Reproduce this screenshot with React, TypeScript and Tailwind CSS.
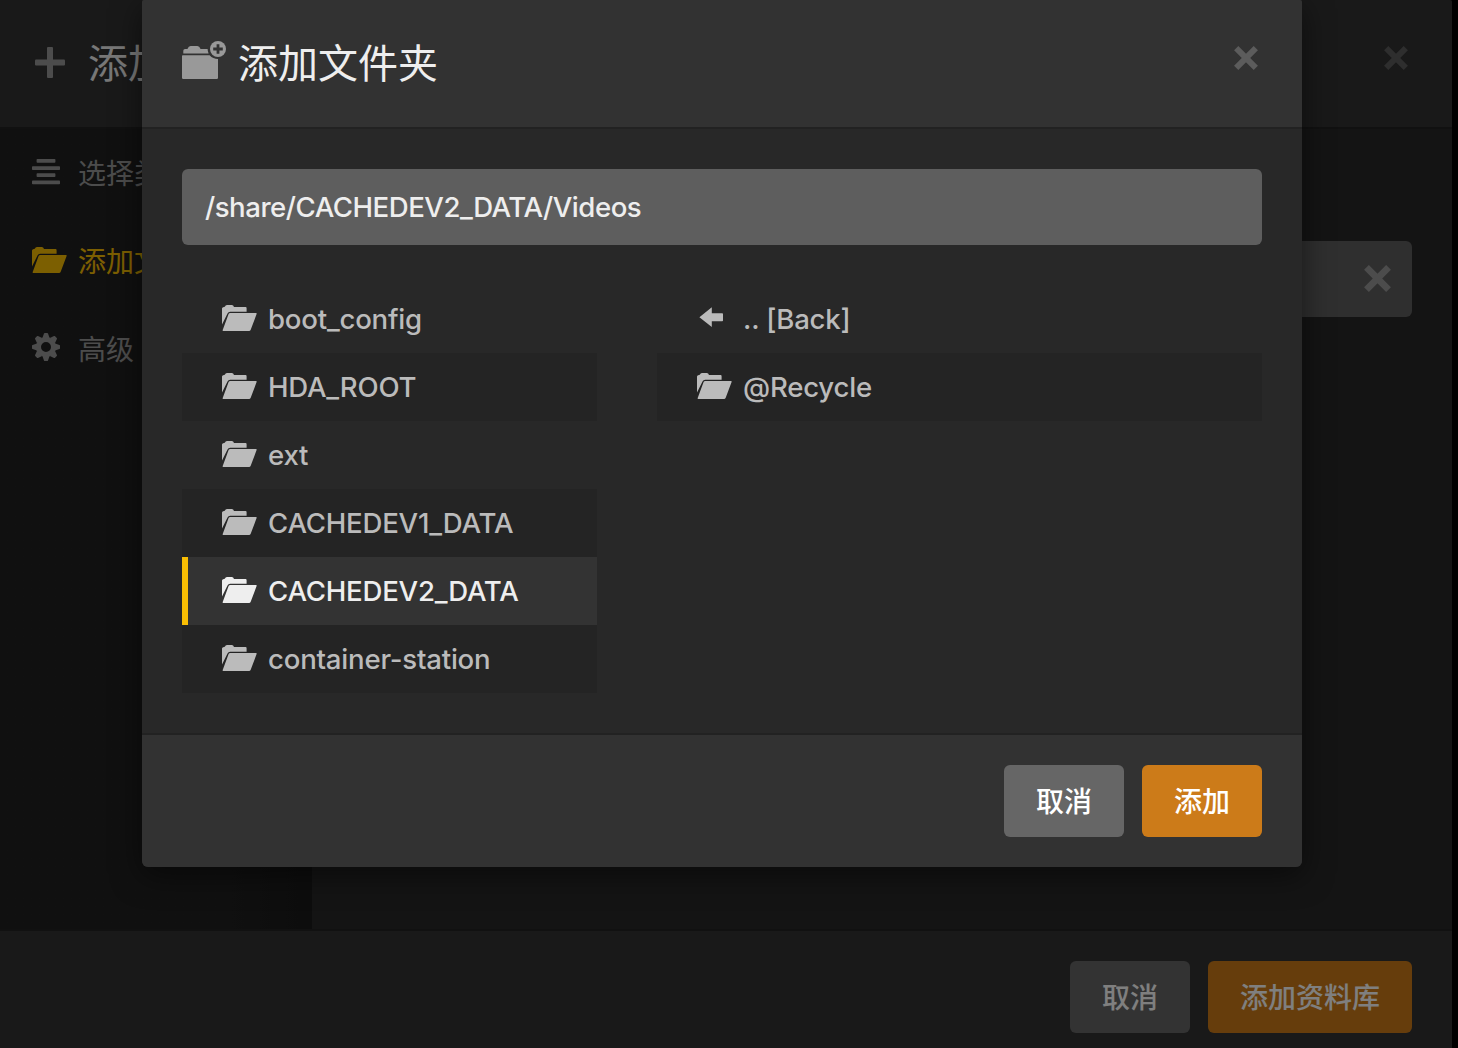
import React from "react";

const FolderOpen = () => (
  <svg className="block shrink-0" width="35" height="26" viewBox="0 0 35 26" fill="currentColor">
    <path d="M0 19.5V3.6Q0 2.4 1.2 2.2L2.8 1.8Q3.4 0 5 0H9.8Q11.4 0 12 2H23.6Q24.6 2 24.6 3.2V6.8H8.2Q6.3 6.8 5.5 8.4Z" />
    <path d="M8.3 8H34Q35 8 34.6 9.1L28.7 24.8Q28.2 26 27 26H1.2Q.3 26 .7 25L6.6 9.1Q7 8 8.3 8Z" />
  </svg>
);

const Cross = ({ size }: { size: number }) => (
  <svg className="block shrink-0" width={size} height={size} viewBox="0 0 24 24" stroke="currentColor" strokeWidth="6">
    <path d="M2.2 2.2 21.8 21.8M21.8 2.2 2.2 21.8" />
  </svg>
);

const Gear = () => (
  <svg className="mb-[2px] block shrink-0" width="28" height="28" viewBox="-14 -14 28 28" fill="currentColor">
    <circle r="7.5" fill="none" stroke="currentColor" strokeWidth="5" />
    {[0, 45, 90, 135, 180, 225, 270, 315].map((a) => (
      <path key={a} transform={`rotate(${a})`} d="M-3.6-9-2-13.4Q-1.8-14-1.2-14H1.2Q1.8-14 2-13.4L3.6-9Z" />
    ))}
  </svg>
);

const Lines = () => (
  <svg className="block shrink-0" width="28" height="26" viewBox="0 0 28 26" fill="currentColor">
    <rect x="4.6" y="0" width="18.8" height="3.8" rx=".8" />
    <rect x="0" y="7.2" width="28" height="3.8" rx=".8" />
    <rect x="4.6" y="14.3" width="18.8" height="3.8" rx=".8" />
    <rect x="0" y="21.4" width="28" height="3.8" rx=".8" />
  </svg>
);

const BackArrow = () => (
  <svg className="block shrink-0" width="35" height="26" viewBox="0 0 35 26" fill="currentColor">
    <path d="M2.4 12.3 14.8 2.2V8.3H25.2Q26 8.3 26 9.1V15.4Q26 16.2 25.2 16.2H14.8V22Z" />
  </svg>
);

const FolderAdd = () => (
  <svg className="block shrink-0" width="45" height="40" viewBox="0 0 45 40" fill="#999">
    <path d="M1.3 13.4V10.8Q1.3 9 3.1 9H5.4Q6.6 6 8.6 6H15.4Q17.4 6 18.6 9H25.6Q25.7 11.6 26.6 13.4Z" />
    <path d="M0 16Q0 15.2.8 15.2H27.6Q31 19 36 19V37.8Q36 39 34.8 39H1.2Q0 39 0 37.8Z" />
    <circle cx="36" cy="9" r="8" />
    <path d="M36 4.2V13.8M31.2 9H40.8" stroke="#323232" strokeWidth="2.8" />
  </svg>
);

const Plus = () => (
  <svg className="block shrink-0" width="30" height="31" viewBox="0 0 30 31" fill="#999">
    <rect x="12" y="0" width="6" height="31" rx="1" />
    <rect x="0" y="12.5" width="30" height="6" rx="1" />
  </svg>
);

const Row = ({ label, odd, active, back }: { label: string; odd?: boolean; active?: boolean; back?: boolean }) => (
  <li
    className={`flex h-[68px] items-center gap-[11px] border-l-[6px] pl-[34px] text-[27.6px] font-[450] tracking-[-0.22px] ${
      active
        ? "border-[#f9be03] bg-[#333333] text-[#eeeeee]"
        : odd
          ? "border-[#242424] bg-[#242424] text-[#bbbbbb]"
          : "border-transparent text-[#bbbbbb]"
    }`}
  >
    <div className="pb-[2px]">{back ? <BackArrow /> : <FolderOpen />}</div>
    <span className="pb-px">{label}</span>
  </li>
);

const NavItem = ({ icon, label, active }: { icon: React.ReactNode; label: string; active?: boolean }) => (
  <li className={`flex h-[88px] items-center pl-8 ${active ? "text-[#f9be03]" : "text-[#999999]"}`}>
    <div className="flex w-[46px] pb-[2px]">{icon}</div>
    <span className="pt-[2px]">{label}</span>
  </li>
);

const Button = ({ label, primary }: { label: string; primary?: boolean }) => (
  <button
    className={`h-[72px] rounded-[6px] px-8 pt-[2px] font-medium text-white ${primary ? "bg-[#cc7b19]" : "bg-[#666666]"}`}
  >
    {label}
  </button>
);

export default function App() {
  return (
    <div className="relative h-[1048px] w-[1458px] overflow-hidden bg-black font-['Inter','Noto_Sans_CJK_SC',sans-serif] text-[28px] leading-10">
      <div className="flex h-full w-[1452px] flex-col overflow-hidden rounded-tr-[2px] bg-[#282828]">
        <header className="flex h-[129px] shrink-0 items-center justify-between border-b-2 border-[#222222] bg-[#323232] pr-11 pl-[35px] text-[40px] text-[#eeeeee]">
          <div className="flex items-center">
            <div className="pb-[2px]"><Plus /></div>
            <h1 className="ml-[23px] w-[80px] overflow-hidden leading-[60px] whitespace-nowrap">添加</h1>
          </div>
          <div className="pb-[11px] text-[#5c5c5c]"><Cross size={24} /></div>
        </header>
        <div className="flex h-[800px] shrink-0">
          <nav className="w-[312px] bg-linear-to-r from-[#212121] from-70% to-[#1a1a1a]">
            <ul>
              <NavItem icon={<Lines />} label="选择类型" />
              <NavItem icon={<FolderOpen />} label="添加文件夹" active />
              <NavItem icon={<Gear />} label="高级" />
            </ul>
          </nav>
          <main className="flex-1 px-10 pt-28">
            <div className="flex h-[76px] items-center justify-end rounded-[6px] bg-[#5e5e5e] pr-[21px] pb-[2px] text-[#999999]">
              <Cross size={27} />
            </div>
          </main>
        </div>
        <footer className="flex h-[134px] shrink-0 items-start justify-end gap-[18px] border-t-2 border-[#222222] bg-[#323232] px-10 pt-[30px]">
          <Button label="取消" />
          <Button label="添加资料库" primary />
        </footer>
      </div>

      <div className="absolute inset-0 flex items-start bg-black/50 pl-[142px]">
        <section className="w-[1160px] rounded-t-[2px] rounded-b-[6px] bg-[#282828] shadow-[0_8px_30px_rgba(0,0,0,0.5)]">
          <header className="flex h-[129px] items-center rounded-t-[2px] border-b-2 border-[#222222] bg-[#323232] pr-11 pl-10 text-[40px] text-[#eeeeee]">
            <div className="pb-[8px]"><FolderAdd /></div>
            <h2 className="ml-[11px] flex-1">添加文件夹</h2>
            <div className="pb-[11px] text-[#5c5c5c]"><Cross size={24} /></div>
          </header>
          <div className="p-10">
            <input
              className="block h-[76px] w-full rounded-[6px] bg-[#5e5e5e] px-[23px] pb-px text-[27.6px] font-[450] tracking-[-0.48px] text-[#eeeeee] outline-none"
              defaultValue="/share/CACHEDEV2_DATA/Videos"
            />
            <div className="mt-10 flex gap-[60px]">
              <ul className="w-[415px]">
                <Row label="boot_config" />
                <Row label="HDA_ROOT" odd />
                <Row label="ext" />
                <Row label="CACHEDEV1_DATA" odd />
                <Row label="CACHEDEV2_DATA" active />
                <Row label="container-station" odd />
              </ul>
              <ul className="flex-1">
                <Row label=".. [Back]" back />
                <Row label="@Recycle" odd />
              </ul>
            </div>
          </div>
          <footer className="flex h-[134px] items-start justify-end gap-[18px] rounded-b-[6px] border-t-2 border-[#222222] bg-[#323232] px-10 pt-[30px]">
            <Button label="取消" />
            <Button label="添加" primary />
          </footer>
        </section>
      </div>
    </div>
  );
}
